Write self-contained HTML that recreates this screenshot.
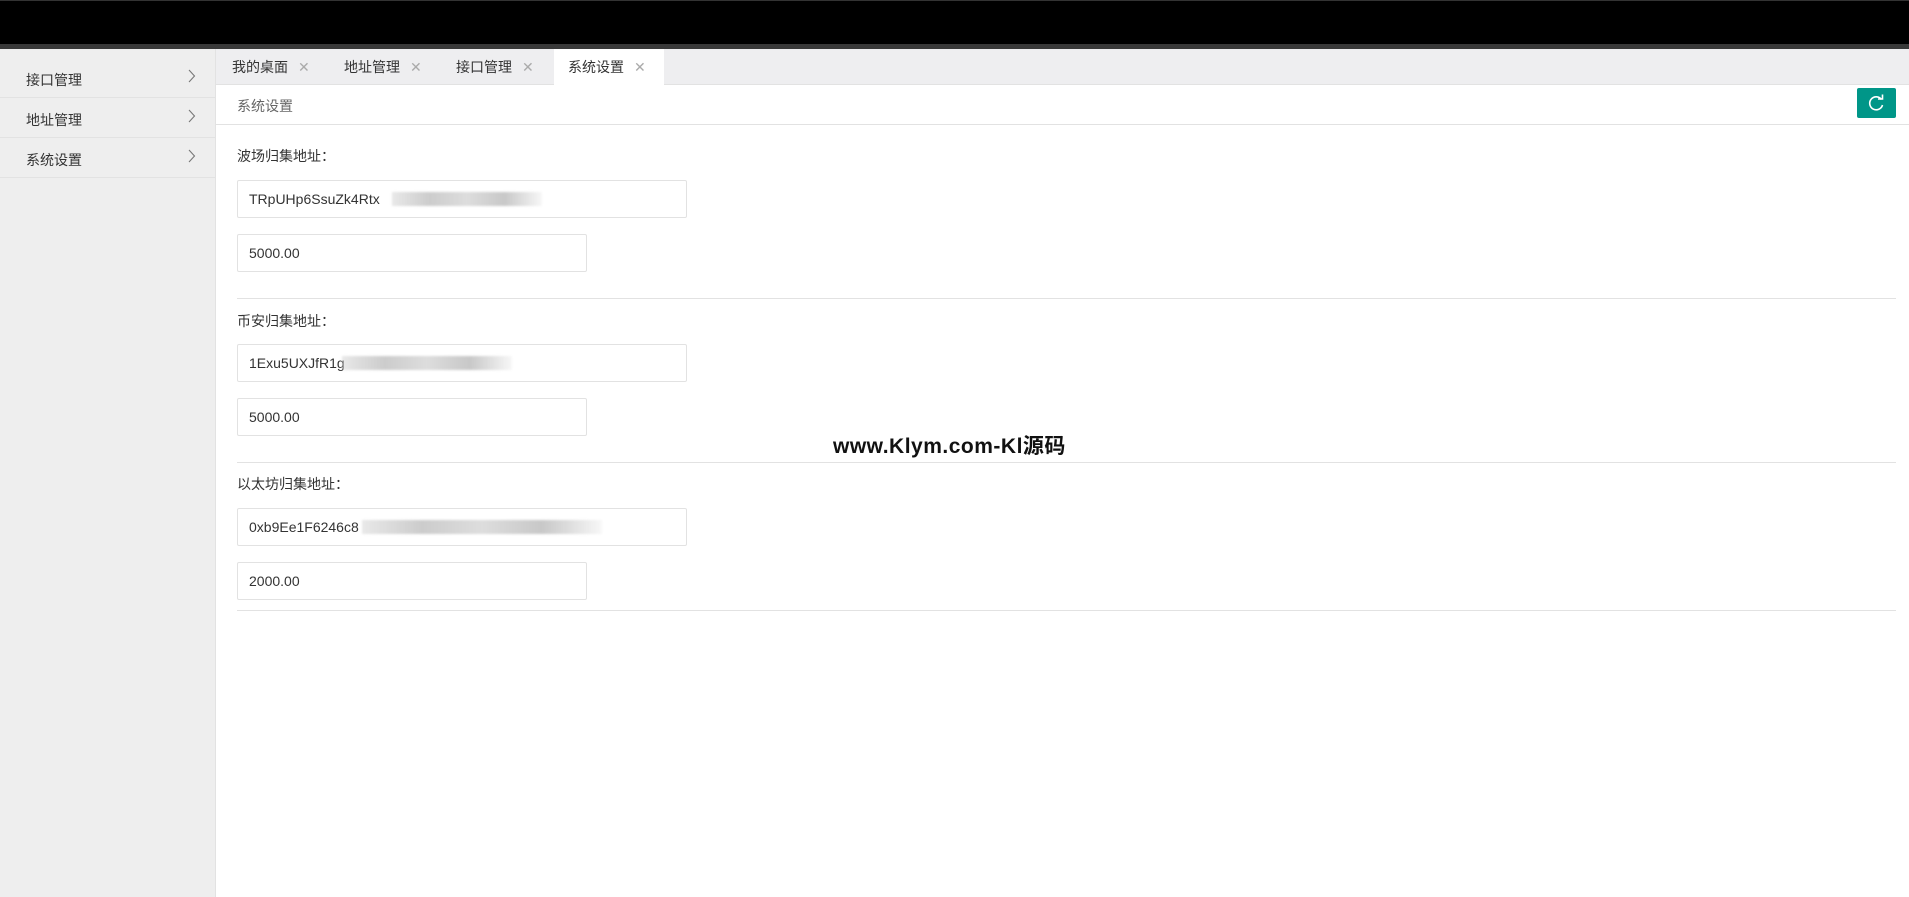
<!DOCTYPE html>
<html><head><meta charset="utf-8"><style>
*{margin:0;padding:0;box-sizing:border-box}
body{width:1909px;height:897px;background:#fff;font-family:"Liberation Sans","Noto Sans CJK SC",sans-serif;font-size:14px;color:#333;position:relative;overflow:hidden}
.hd{position:absolute;left:0;top:0;width:1909px;height:44px;background:#000;border-top:1px solid #333}
.hl{position:absolute;left:0;top:44px;width:1909px;height:5px;background:#393939}
.side{position:absolute;left:0;top:49px;width:216px;height:848px;background:#eee;border-right:1px solid #e2e2e2}
.mi{position:absolute;left:0;width:215px;border-bottom:1px solid #e2e2e2;font-size:14px;color:#333}
.mi b{position:absolute;left:26px;font-weight:normal;line-height:20px}
.mi svg{position:absolute;left:188px}
.tabs{position:absolute;left:216px;top:49px;width:1693px;height:36px;background:#eeeef0;border-bottom:1px solid #e2e2e2}
.tab{position:absolute;top:0;height:36px;line-height:36px;font-size:14px;color:#333}
.tab i{font-style:normal;color:#aaa;margin-left:10px;font-size:14px}
.tab.act{background:#fff;height:37px}
.bc{position:absolute;left:216px;top:85px;width:1693px;height:40px;border-bottom:1px solid #e2e2e2}
.bc span{position:absolute;left:21px;top:11px;color:#666;font-size:14px}
.btn{position:absolute;left:1857px;top:88px;width:39px;height:30px;background:#009688;border-radius:2px}
.lbl{position:absolute;left:237px;font-size:14px;color:#333}
.inp{position:absolute;left:237px;height:38px;border:1px solid #e2e2e2;line-height:36px;padding-left:11px;font-size:14px;color:#333;border-radius:2px}
.blur{position:absolute;height:14px;background:linear-gradient(90deg,rgba(210,210,210,.5),#ccc,#ddd,#c8c8c8,rgba(230,230,230,.3));filter:blur(1px)}
.sep{position:absolute;left:237px;width:1659px;height:1px;background:#e2e2e2}
.wm{position:absolute;left:833px;top:430px;font-size:21px;font-weight:bold;color:#111;letter-spacing:0.5px}
</style></head><body>
<div class="hd"></div><div class="hl"></div>
<div class="side">
<div class="mi" style="top:0;height:49px"><b style="top:21px">接口管理</b><svg style="top:20px" width="8" height="14" viewBox="0 0 8 14"><path d="M1 1 L6.5 7 L1 13" fill="none" stroke="#777" stroke-width="1.1"/></svg></div>
<div class="mi" style="top:49px;height:40px"><b style="top:12px">地址管理</b><svg style="top:11px" width="8" height="14" viewBox="0 0 8 14"><path d="M1 1 L6.5 7 L1 13" fill="none" stroke="#777" stroke-width="1.1"/></svg></div>
<div class="mi" style="top:89px;height:40px"><b style="top:12px">系统设置</b><svg style="top:11px" width="8" height="14" viewBox="0 0 8 14"><path d="M1 1 L6.5 7 L1 13" fill="none" stroke="#777" stroke-width="1.1"/></svg></div>
</div>
<div class="tabs">
<div class="tab" style="left:16px">我的桌面<i>✕</i></div>
<div class="tab" style="left:128px">地址管理<i>✕</i></div>
<div class="tab" style="left:240px">接口管理<i>✕</i></div>
<div class="tab act" style="left:338px;width:110px;padding-left:14px">系统设置<i>✕</i></div>
</div>
<div class="bc"><span>系统设置</span></div>
<div class="btn"><svg width="39" height="30" viewBox="0 0 39 30"><path d="M24.5 11.5 A6.5 6.5 0 1 0 25.5 17" fill="none" stroke="#fff" stroke-width="1.6"/><path d="M21 11 L25.5 11 L25.5 6.5" fill="none" stroke="#fff" stroke-width="1.6"/></svg></div>

<div class="lbl" style="top:146px">波场归集地址：</div>
<div class="inp" style="top:180px;width:450px">TRpUHp6SsuZk4Rtx</div>
<div class="blur" style="left:392px;top:192px;width:150px"></div>
<div class="inp" style="top:234px;width:350px">5000.00</div>
<div class="sep" style="top:298px"></div>

<div class="lbl" style="top:311px">币安归集地址：</div>
<div class="inp" style="top:344px;width:450px">1Exu5UXJfR1g</div>
<div class="blur" style="left:342px;top:356px;width:170px"></div>
<div class="inp" style="top:398px;width:350px">5000.00</div>
<div class="sep" style="top:462px"></div>

<div class="lbl" style="top:474px">以太坊归集地址：</div>
<div class="inp" style="top:508px;width:450px">0xb9Ee1F6246c8</div>
<div class="blur" style="left:362px;top:520px;width:240px"></div>
<div class="inp" style="top:562px;width:350px">2000.00</div>
<div class="sep" style="top:610px"></div>

<div class="wm">www.Klym.com-Kl源码</div>
</body></html>
